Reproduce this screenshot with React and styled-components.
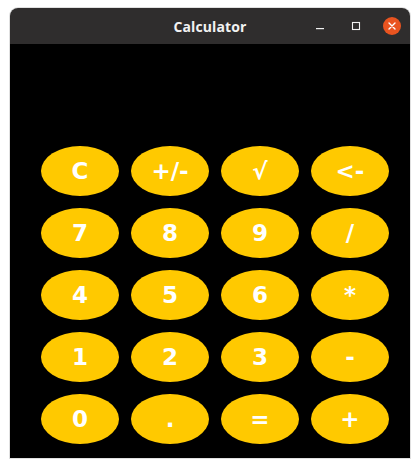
import React from "react";
import styled, { createGlobalStyle } from "styled-components";

const Global = createGlobalStyle`
  html, body { margin: 0; padding: 0; background: #ffffff; }
  body { width: 420px; height: 468px; overflow: hidden; }
`;

const Page = styled.div`
  padding: 8px 10px 0 10px;
`;

const Window = styled.div`
  width: 400px;
  height: 450px;
  display: flex;
  flex-direction: column;
  border-radius: 8px 8px 0 0;
  overflow: hidden;
  box-shadow: 0 0 0 1px rgba(0, 0, 0, 0.12);
`;

const TitleBar = styled.div`
  height: 36px;
  flex: none;
  background: #2f2d2d;
  position: relative;
  display: flex;
  align-items: center;
  justify-content: center;
`;

const Title = styled.div`
  font-family: "Open Sans", "DejaVu Sans", sans-serif;
  font-weight: 700;
  font-size: 14px;
  color: #f2f2f2;
  letter-spacing: 0.1px;
`;

const Controls = styled.div`
  position: absolute;
  right: 9px;
  top: 0;
  height: 36px;
  display: flex;
  align-items: center;
  gap: 18px;
`;

const CtrlBtn = styled.div`
  width: 18px;
  height: 18px;
  display: flex;
  align-items: center;
  justify-content: center;
  border-radius: 50%;
  background: ${(p) => (p.$close ? "#e95420" : "transparent")};
`;

const Content = styled.div`
  flex: 1;
  background: #000000;
  padding: 102px 0 0 31px;
`;

const Grid = styled.div`
  display: grid;
  grid-template-columns: repeat(4, 78px);
  grid-auto-rows: 50px;
  column-gap: 12px;
  row-gap: 12px;
`;

const Key = styled.div`
  background: #ffc900;
  border-radius: 50%;
  display: flex;
  align-items: center;
  justify-content: center;
  color: #ffffff;
  font-family: "DejaVu Sans", sans-serif;
  font-weight: 700;
  font-size: 23px;
  line-height: 1;
`;

const keys = [
  "C", "+/-", "√", "<-",
  "7", "8", "9", "/",
  "4", "5", "6", "*",
  "1", "2", "3", "-",
  "0", ".", "=", "+",
];

export default function App() {
  return (
    <>
      <Global />
      <Page>
        <Window>
          <TitleBar>
            <Title>Calculator</Title>
            <Controls>
              <CtrlBtn>
                <svg width="10" height="10" viewBox="0 0 10 10">
                  <rect x="1" y="7" width="8" height="1.2" fill="#f2f2f2" />
                </svg>
              </CtrlBtn>
              <CtrlBtn>
                <svg width="10" height="10" viewBox="0 0 10 10">
                  <rect x="1.5" y="1.5" width="7" height="7" fill="none" stroke="#f2f2f2" strokeWidth="1.1" />
                </svg>
              </CtrlBtn>
              <CtrlBtn $close>
                <svg width="10" height="10" viewBox="0 0 10 10">
                  <path d="M2 2 L8 8 M8 2 L2 8" stroke="#ffffff" strokeWidth="1.4" strokeLinecap="round" />
                </svg>
              </CtrlBtn>
            </Controls>
          </TitleBar>
          <Content>
            <Grid>
              {keys.map((k) => (
                <Key key={k}>{k}</Key>
              ))}
            </Grid>
          </Content>
        </Window>
      </Page>
    </>
  );
}
